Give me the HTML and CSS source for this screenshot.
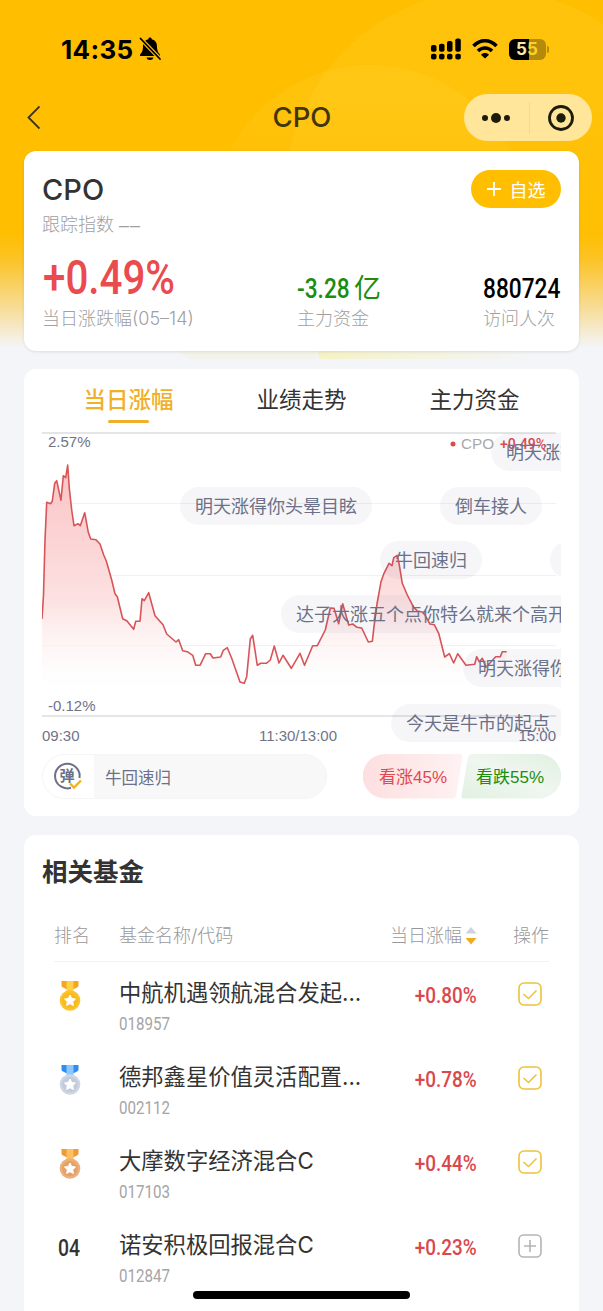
FILE: index.html
```html
<!DOCTYPE html>
<html lang="zh-CN">
<head>
    <meta charset="UTF-8">
    <meta name="viewport" content="width=device-width, initial-scale=1.0">
    <title>CPO</title>
    <link rel="stylesheet" href="styles.css">
</head>
<body>
    <svg class="hero-bg" width="603" height="370" viewBox="0 0 603 370">
        <defs>
            <linearGradient id="heroFade" x1="0" y1="0" x2="0" y2="1">
                <stop offset="0.63" stop-color="#ffbe00"/>
                <stop offset="0.7" stop-color="#fcc325"/>
                <stop offset="0.83" stop-color="#f7dc94"/>
                <stop offset="0.94" stop-color="#f4f5f9"/>
            </linearGradient>
            <linearGradient id="arcFade" gradientUnits="userSpaceOnUse" x1="0" y1="0" x2="0" y2="330">
                <stop offset="0.3" stop-color="#ffd63a" stop-opacity="0.2"/>
                <stop offset="0.75" stop-color="#ffd63a" stop-opacity="0"/>
            </linearGradient>
            <linearGradient id="stripFade">
                <stop offset="0" stop-color="#f5f2c6"/>
                <stop offset="1" stop-color="#f4f5f9"/>
            </linearGradient>
        </defs>
        <rect width="603" height="370" fill="url(#heroFade)"/>
        <circle cx="370" cy="222" r="157" fill="url(#arcFade)"/>
        <circle cx="490" cy="195" r="205" fill="url(#arcFade)"/>
        <path d="M176 350H316V359H190Z" fill="#f3f3ea"/>
        <path d="M316 350H540V359H320Z" fill="url(#stripFade)"/>
    </svg>

    <div class="page">
        <div class="status-bar">
            <div class="status-left">
                <span class="time">14:35</span>
                <svg width="24" height="26" viewBox="0 0 24 26">
                    <path d="M12 1.500C11 1.500 10.300 2.200 10.300 3.200C6.500 4 5 7 5 10.500C5 15 3.500 17 2 18.500V20H22V18.500C20.500 17 19 15 19 10.500C19 7 17.500 4 13.700 3.200C13.700 2.200 13 1.500 12 1.500Z"/>
                    <path d="M8.500 21.500H15.500C15 23.200 13.800 24 12 24S9 23.200 8.500 21.500Z"/>
                    <path d="M1 1L24 25" stroke="#ffbe00" stroke-width="4"/>
                    <path d="M2.500 2.500L22 23" stroke="#000" stroke-width="1.800" stroke-linecap="round"/>
                </svg>
            </div>
            <div class="status-right">
                <svg width="30" height="22" viewBox="0 0 30 25" preserveAspectRatio="none">
                    <rect x="0" y="8" width="5.500" height="7.500" rx="2"/>
                    <rect x="8" y="6.500" width="5.500" height="9" rx="2"/>
                    <rect x="16" y="3.500" width="5.500" height="12" rx="2"/>
                    <rect x="24.300" y="0.500" width="5.500" height="15" rx="2"/>
                    <rect x="0" y="18" width="5.500" height="6.500" rx="2"/>
                    <rect x="8" y="18" width="5.500" height="6.500" rx="2"/>
                    <rect x="16" y="18" width="5.500" height="6.500" rx="2"/>
                    <rect x="24.300" y="18" width="5.500" height="6.500" rx="2"/>
                </svg>
                <svg width="26" height="22" viewBox="0 0 26 22" fill="none" stroke="#000" stroke-width="3.600">
                    <path d="M1.500 8C8 1 18 1 24.500 8"/>
                    <path d="M6 13C10 9 16 9 20 13"/>
                    <path d="M13 20.500L9 16.800C11 14.300 15 14.300 17 16.800Z" fill="#000" stroke="none"/>
                </svg>
                <div class="battery"><span class="battery-on">5</span><span class="battery-off">5</span></div>
            </div>
        </div>

        <div class="nav-bar">
            <svg width="16" height="26" viewBox="0 0 16 26" fill="none" stroke="#3b3413" stroke-width="1.800">
                <path d="M15.500 1.500L4.500 12.500L15.500 23.500"/>
            </svg>
            <h1>CPO</h1>
            <div class="capsule">
                <svg width="30" height="14" viewBox="0 0 30 14">
                    <circle cx="4" cy="7" r="3"/>
                    <circle cx="15" cy="7" r="5"/>
                    <circle cx="26" cy="7" r="3"/>
                </svg>
                <i></i>
                <svg width="28" height="28" viewBox="0 0 28 28">
                    <circle cx="14" cy="14" r="11.500" fill="none" stroke="#1e1b0b" stroke-width="2.800"/>
                    <circle cx="14" cy="14" r="4.700"/>
                </svg>
            </div>
        </div>

        <section class="card summary">
            <div class="summary-top">
                <h2>CPO</h2>
                <button class="btn-add">
                    <svg width="14" height="14" viewBox="0 0 14 14" stroke="#fff" stroke-width="1.800"><path d="M7 0V14M0 7H14"/></svg>
                    自选
                </button>
            </div>
            <p class="track">跟踪指数 <span>––</span></p>
            <div class="stats">
                <div class="stat stat-main">
                    <strong class="din"><span>+0.49%</span></strong>
                    <p>当日涨跌幅(05–14)</p>
                </div>
                <div class="stat stat-fund">
                    <strong class="din"><span>-3.28</span></strong><em>亿</em>
                    <p>主力资金</p>
                </div>
                <div class="stat stat-visit">
                    <strong class="din"><span>880724</span></strong>
                    <p>访问人次</p>
                </div>
            </div>
        </section>

        <section class="card trend">
            <div class="tabs">
                <a class="active">当日涨幅</a>
                <a>业绩走势</a>
                <a>主力资金</a>
            </div>
            <div class="chart">
                <svg width="519" height="313" viewBox="42 432 519 313">
                    <defs>
                        <linearGradient id="areaFill" gradientUnits="userSpaceOnUse" x1="0" y1="465" x2="0" y2="690">
                            <stop offset="0" stop-color="#f9b9bb"/>
                            <stop offset="0.600" stop-color="#fcdcdc"/>
                            <stop offset="1" stop-color="#fff" stop-opacity="0.300"/>
                        </linearGradient>
                    </defs>
                    <path class="grid" d="M42 503.500H556M42 575.500H556M42 645.500H556"/>
                    <path id="area" fill="url(#areaFill)" fill-opacity="0.850"/>
                    <path class="edge" d="M42 433H556M42 716H556"/>
                    <polyline id="line" points="42,619 43.500,595 45,540 46.700,502.300 50.700,503.700 52.300,501 54.700,483.300 56.700,480.700 61,500.300 63.300,475.700 65.700,477.700 67.700,465 69.300,488.300 71.700,510 74,525.700 78,523.700 80.300,525.700 84.700,512.700 88.300,532.300 90.700,539 96,539.700 100,544 103.700,555 106.300,561 111.700,580 115,593.700 117.300,596.700 122.700,618.700 127,621 133.700,629.300 135.700,621.300 140,621.300 142,598.700 144.300,600.700 148.700,592.700 155,615.700 163,624.700 166.700,634 176,642 178.700,639.700 182.700,650.700 187.300,651.700 192.700,655.300 195.700,665.300 200,665.300 205.700,653.700 210.300,653.700 213,658 220.700,657 223.300,650.300 227.300,647.700 231.700,658.300 240,682 244.300,683.300 246.700,676.700 250.300,639 252.700,635.300 257.300,665.300 260.700,663.300 266.300,663.300 270.300,660 274.300,646 279,663 283,655.300 291.300,668.300 300,653.300 304.500,665.300 312.700,645.700 317.300,645.700 325.300,630 330.300,608 334,608.300 338.700,623.700 342.700,603.700 348.700,625 352.700,624 357,627.300 361.700,628 368.300,642 372.300,641.300 374,626.700 377,604 381,581.700 384,573.300 389,563.300 392,565.700 393.700,557.700 397.300,555.300 399.300,565 402.300,583.300 407.300,595 413.300,606.700 417.300,611 423.300,612.300 430,624 434.300,624.700 438.700,633.300 444.700,657 449.300,653.700 453.700,663 457.700,653.700 466,665.300 474.700,664.300 476.700,656.700 479.300,662 482.300,658.300 486,667.300 495.700,656.700 500.300,656.700 502.300,651.700 506.700,651.700"/>
                    <g class="axis">
                        <text x="48" y="447">2.57%</text>
                        <text x="48" y="711">-0.12%</text>
                        <text x="42" y="741">09:30</text>
                        <text x="298" y="741" text-anchor="middle">11:30/13:00</text>
                        <text x="556" y="741" text-anchor="end">15:00</text>
                    </g>
                    <circle cx="453" cy="444" r="2.500" fill="#e04a4e"/>
                    <text class="legend" x="461" y="449" textLength="33" lengthAdjust="spacingAndGlyphs">CPO</text>
                    <text class="legend-val" x="500" y="449" textLength="46" lengthAdjust="spacingAndGlyphs">+0.49%</text>
                </svg>
                <!-- 弹幕 -->
                <div class="danmu">
                    <span class="d1">明天涨得你头晕目眩</span>
                    <span class="d2">明天涨得你头晕目眩</span>
                    <span class="d3">倒车接人</span>
                    <span class="d4">牛回速归</span>
                    <span class="d5">倒车接人</span>
                    <span class="d6">达子大涨五个点你特么就来个高开</span>
                    <span class="d7">明天涨得你头晕目眩</span>
                    <span class="d8">今天是牛市的起点</span>
                </div>
            </div>
            <div class="vote-row">
                <div class="danmu-input">
                    <div class="danmu-switch">
                        <svg width="30" height="30" viewBox="0 0 30 30" fill="none">
                            <path d="M26.500 17A12.300 12.300 0 1 0 18 26.800" stroke="#6b7188" stroke-width="2"/>
                            <path d="M17 22.500L21 26.500L28 19.500" stroke="#f2b31c" stroke-width="2.400"/>
                            <text x="14" y="20" text-anchor="middle">弹</text>
                        </svg>
                    </div>
                    <span>牛回速归</span>
                </div>
                <div class="vote">
                    <svg width="198" height="45" viewBox="0 0 198 45">
                        <defs>
                            <linearGradient id="upFill"><stop offset="0" stop-color="#fddfe0"/><stop offset="1" stop-color="#fef2f2"/></linearGradient>
                            <linearGradient id="downFill" x1="0" y1="1" x2="1" y2="0"><stop offset="0" stop-color="#e0f1e1"/><stop offset="0.500" stop-color="#f0f6f0"/><stop offset="1" stop-color="#e0f0e1"/></linearGradient>
                        </defs>
                        <path d="M22 0H97Q100 0 99.500 3L93 42Q92 44.500 90 44.500H22A22 22 0 0 1 22 0Z" fill="url(#upFill)"/>
                        <path d="M108 0H176A22 22 0 0 1 176 44.500H101Q98 44.500 98.500 42L105 3Q106 0 108 0Z" fill="url(#downFill)"/>
                        <text x="16" y="29" fill="#e04a4e" textLength="68">看涨45%</text>
                        <text x="113" y="29" fill="#1d8d12" textLength="68">看跌55%</text>
                    </svg>
                </div>
            </div>
        </section>

        <section class="card funds">
            <h3>相关基金</h3>
            <div class="row head">
                <span>排名</span>
                <span>基金名称/代码</span>
                <span class="sort">当日涨幅<svg width="12" height="18" viewBox="0 0 12 18"><path d="M6 0L11.500 6.500H0.500Z" fill="#cfd3e0"/><path d="M6 17.500L11.500 11H0.500Z" fill="#f0ab22"/></svg></span>
                <span class="op">操作</span>
            </div>
            <div class="row">
                <svg class="medal gold" width="22" height="32" viewBox="0 0 22 32"><use href="#medal"/></svg>
                <div class="fund"><p>中航机遇领航混合发起...</p><small class="din"><span>018957</span></small></div>
                <b class="din"><span>+0.80%</span></b>
                <svg class="check" width="24" height="24" viewBox="0 0 24 24"><use href="#check"/></svg>
            </div>
            <div class="row">
                <svg class="medal silver" width="22" height="32" viewBox="0 0 22 32"><use href="#medal"/></svg>
                <div class="fund"><p>德邦鑫星价值灵活配置...</p><small class="din"><span>002112</span></small></div>
                <b class="din"><span>+0.78%</span></b>
                <svg class="check" width="24" height="24" viewBox="0 0 24 24"><use href="#check"/></svg>
            </div>
            <div class="row">
                <svg class="medal bronze" width="22" height="32" viewBox="0 0 22 32"><use href="#medal"/></svg>
                <div class="fund"><p>大摩数字经济混合C</p><small class="din"><span>017103</span></small></div>
                <b class="din"><span>+0.44%</span></b>
                <svg class="check" width="24" height="24" viewBox="0 0 24 24"><use href="#check"/></svg>
            </div>
            <div class="row">
                <div class="rank din"><span>04</span></div>
                <div class="fund"><p>诺安积极回报混合C</p><small class="din"><span>012847</span></small></div>
                <b class="din"><span>+0.23%</span></b>
                <svg class="plus" width="24" height="24" viewBox="0 0 24 24"><rect x="1" y="1" width="22" height="22" rx="4.500"/><path d="M12 6V18M6 12H18"/></svg>
            </div>
        </section>
    </div>
    <div class="home-bar"></div>

    <svg class="symbols" width="0" height="0">
        <symbol id="medal" viewBox="0 0 22 32">
            <path class="ribbon" d="M2.500 1H19.500V5.500Q19.500 7 18 7.500L14 9.500H8L4 7.500Q2.500 7 2.500 5.500Z"/>
            <path class="strap" d="M7.500 1H14.500V12H7.500Z"/>
            <circle class="disc" cx="11" cy="20.500" r="10.300"/>
            <circle class="inner" cx="11" cy="20.500" r="7.800"/>
            <path d="M11 15L12.700 18.500L16.500 19L13.700 21.700L14.400 25.500L11 23.700L7.600 25.500L8.300 21.700L5.500 19L9.300 18.500Z" fill="#fff" stroke="#fff" stroke-linejoin="round"/>
        </symbol>
        <symbol id="check" viewBox="0 0 24 24">
            <rect x="1" y="1" width="22" height="22" rx="5"/>
            <path d="M5.500 12L10.500 16.500L18.500 8.500"/>
        </symbol>
    </svg>

    <script>
        // 折线下方的渐变区域
        const points = document.getElementById('line').getAttribute('points');
        document.getElementById('area').setAttribute('d', 'M42 690L' + points.split(' ').join('L') + 'V690Z');
    </script>
</body>
</html>
```
FILE: styles.css
```css
* {
    box-sizing: border-box;
}

body {
    margin: 0;
    height: 1311px;
    overflow: hidden;
    position: relative;
    background: #f4f5f9;
    color: #333;
    font-family: Inter, "Noto Sans CJK SC", sans-serif;
}

h1, h2, h3, p {
    margin: 0;
    font-weight: 400;
}

svg {
    display: block;
    flex: none;
}

.hero-bg {
    position: absolute;
    top: 0;
    left: 0;
}

.page {
    position: relative;
    padding: 0 24px;
}

/* 窄体数字 */
.din {
    display: inline-block;
    font-family: Roboto, sans-serif;
    font-style: normal;
    white-space: nowrap;
}

.din span {
    display: inline-block;
    transform: scaleX(0.84);
    transform-origin: left center;
}

/* 状态栏 */
.status-bar {
    height: 94px;
    padding: 4px 33px 0 37px;
    display: flex;
    align-items: center;
    justify-content: space-between;
}

.status-left,
.status-right {
    display: flex;
    align-items: center;
}

.time {
    width: 77px;
    font-size: 26px;
    font-weight: 700;
    letter-spacing: 0.3px;
    color: #000;
    white-space: nowrap;
}

.status-right {
    gap: 11px;
}

.battery {
    position: relative;
    width: 37px;
    height: 21px;
    display: flex;
    border-radius: 6px;
    background: linear-gradient(90deg, #000 55%, #b48a0c 55%);
    font-size: 17px;
    line-height: 21px;
    font-weight: 700;
    padding-left: 7px;
    color: #ffe9a0;
}

.battery::after {
    content: "";
    position: absolute;
    right: -3px;
    top: 7px;
    width: 2px;
    height: 7px;
    border-radius: 0 2px 2px 0;
    background: #b48a0c;
}

.battery-off {
    color: #ffd02c;
}

/* 导航栏 */
.nav-bar {
    height: 47px;
    display: flex;
    align-items: center;
    justify-content: space-between;
    margin-right: -13px;
}

.nav-bar h1 {
    font-size: 27.5px;
    font-weight: 500;
    line-height: 47px;
    color: #40370f;
    margin-left: 100px;
}

.capsule {
    width: 128px;
    height: 47px;
    padding: 0 17px;
    display: flex;
    align-items: center;
    justify-content: space-between;
    border-radius: 24px;
    background: #ffe69b;
    fill: #1e1b0b;
}

.capsule i {
    width: 1px;
    height: 32px;
    background: #f2d98c;
}

.card {
    background: #fff;
    border-radius: 12px;
    padding: 0 18px;
}

/* 概要 */
.summary {
    height: 200px;
    margin-top: 10px;
    padding-top: 19px;
    box-shadow: 0 1px 3px rgba(60, 60, 60, 0.12);
}

.summary-top {
    display: flex;
    justify-content: space-between;
    height: 42px;
}

.summary h2 {
    font-size: 29px;
    font-weight: 500;
    line-height: 40px;
}

.btn-add {
    width: 90px;
    height: 38px;
    padding: 0;
    display: flex;
    align-items: center;
    justify-content: center;
    gap: 9px;
    border: none;
    border-radius: 19px;
    background: #ffbe00;
    color: #fff;
    font-family: "Noto Sans CJK SC", sans-serif;
    font-size: 18px;
}

.track {
    font-size: 18px;
    font-weight: 300;
    line-height: 26px;
    color: #a0a0a0;
}

.track span {
    font-family: "Liberation Sans", sans-serif;
    letter-spacing: 1px;
}

.stats {
    display: flex;
    padding-top: 13px;
}

.stat {
    flex: none;
    white-space: nowrap;
}

.stat p {
    font-size: 18px;
    line-height: 28px;
    color: #a0a0a0;
    font-weight: 300;
}

.stat strong {
    display: inline-block;
    height: 54px;
    font-weight: 500;
    vertical-align: top;
}

.stat-main {
    width: 255px;
}

.stat-main strong {
    padding-left: 1px;
    font-size: 48px;
    line-height: 54px;
    color: #e94b4e;
}

.stat-fund {
    width: 186px;
    color: #1d8d12;
}

.stat-fund strong {
    width: 57px;
    font-size: 27px;
    line-height: 77px;
}

.stat-fund em {
    font-style: normal;
    font-size: 27px;
    line-height: 76px;
    height: 54px;
    display: inline-block;
    vertical-align: top;
}

.stat-visit strong {
    font-size: 27px;
    line-height: 77px;
    color: #000;
}

/* 走势 */
.trend {
    height: 447px;
    margin-top: 18px;
}

.tabs {
    display: grid;
    grid-template-columns: repeat(3, 1fr);
    height: 63px;
    text-align: center;
    font-size: 22.5px;
    line-height: 62px;
}

.tabs a.active {
    font-weight: 500;
    color: #f0b02a;
}

.tabs a.active::after {
    content: "";
    display: block;
    width: 41px;
    height: 3px;
    margin: -11px auto 0;
    border-radius: 2px;
    background: #f0b02a;
}

.chart {
    position: relative;
    height: 313px;
}

.grid {
    stroke: #f0f1f4;
}

.edge {
    stroke: #dcdde0;
    stroke-width: 1.5;
}

#line {
    fill: none;
    stroke: #d75558;
    stroke-width: 1.6;
    stroke-linejoin: round;
}

.axis {
    font: 15px "Liberation Sans", sans-serif;
    fill: #6f7486;
}

.legend {
    font: 15px "Liberation Sans", sans-serif;
    fill: #a8a8a8;
}

.legend-val {
    font: 500 15px Roboto, sans-serif;
    fill: #e04a4e;
}

.danmu {
    position: absolute;
    top: 0;
    left: 0;
    width: 519px;
    height: 313px;
    overflow: hidden;
}

.danmu span {
    position: absolute;
    height: 38px;
    padding: 0 15px;
    border-radius: 19px;
    background: rgba(70, 85, 130, 0.05);
    color: #6b7188;
    font-size: 18px;
    line-height: 39px;
    white-space: nowrap;
}

.d1 { left: 449px; top: 1px; }
.d2 { left: 138px; top: 55px; }
.d3 { left: 398px; top: 55px; }
.d4 { left: 338px; top: 109px; }
.d5 { left: 508px; top: 109px; }
.d6 { left: 239px; top: 163px; }
.d7 { left: 421px; top: 217px; }
.d8 { left: 349px; top: 272px; }

.vote-row {
    display: flex;
    justify-content: space-between;
    padding-top: 9px;
}

.danmu-input {
    width: 285px;
    height: 45px;
    display: flex;
    align-items: center;
    overflow: hidden;
    border: 1px solid #f5f5f6;
    border-radius: 23px;
    background: #f8f8f9;
    color: #6b7188;
    font-size: 16.5px;
}

.danmu-switch {
    width: 51px;
    height: 43px;
    margin-right: 11px;
    padding: 6px 0 0 10px;
    background: #fff;
}

.danmu-switch text {
    font-size: 15px;
    font-weight: 700;
    fill: #6b7188;
}

.vote text {
    font-family: "Liberation Sans", "Noto Sans CJK SC", sans-serif;
    font-size: 17px;
}

/* 相关基金 */
.funds {
    height: 500px;
    margin-top: 19px;
    padding-top: 18px;
}

.funds h3 {
    font-size: 25.5px;
    font-weight: 700;
    line-height: 38px;
}

.row {
    display: grid;
    grid-template-columns: 65px 242px 1fr 72px;
    height: 84px;
    margin: 0 12px;
}

.row.head {
    height: 71px;
    padding-top: 18px;
    border-bottom: 1px solid #f2f2f4;
    line-height: 53px;
    font-size: 18px;
    font-weight: 300;
    color: #999;
}

.sort {
    display: flex;
    align-items: center;
    justify-content: flex-end;
    gap: 3px;
    white-space: nowrap;
}

.op {
    text-align: right;
}

.medal {
    margin: 18px 0 0 5px;
}

.gold { --ribbon: #f6a51c; --strap: #ffd04a; --disc: #fbc22c; --inner: #f9b91f; }
.silver { --ribbon: #2c8ff0; --strap: #8cc8fc; --disc: #ced5e4; --inner: #c2cadb; }
.bronze { --ribbon: #ee9a36; --strap: #fdc062; --disc: #edb078; --inner: #e3a269; }

.ribbon { fill: var(--ribbon); }
.strap { fill: var(--strap); }
.disc { fill: var(--disc); }
.inner { fill: var(--inner); }

.fund p {
    padding-top: 12px;
    font-size: 22.3px;
    line-height: 37px;
    white-space: nowrap;
}

.fund small {
    display: block;
    font-size: 18px;
    line-height: 25px;
    color: #a5a5a5;
}

.row b {
    font-size: 22.5px;
    font-weight: 500;
    line-height: 67px;
    color: #d9484c;
    text-align: right;
}

.row b span {
    transform-origin: right center;
}

.check,
.plus {
    margin: 20px 0 0 41px;
    fill: none;
    stroke: #edc23c;
    stroke-width: 1.6;
}

.plus {
    stroke: #b5b5b5;
}

.rank {
    padding-left: 4px;
    font-size: 23px;
    font-weight: 500;
    line-height: 70px;
}

.home-bar {
    position: absolute;
    left: 193px;
    bottom: 12px;
    width: 217px;
    height: 8px;
    border-radius: 4px;
    background: #000;
}

.symbols {
    position: absolute;
}
```
